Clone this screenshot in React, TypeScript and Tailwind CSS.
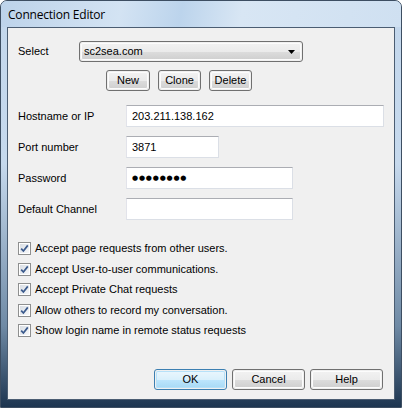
import React from 'react';

const font = "font-['Tahoma','Liberation_Sans',sans-serif]";

const CheckMark = () => (
  <svg width="13" height="13" viewBox="0 0 13 13" className="shrink-0">
    <defs>
      <linearGradient id="cbg" x1="0" y1="0" x2="1" y2="1">
        <stop offset="0" stopColor="#d9dee4" />
        <stop offset="1" stopColor="#f6f7f9" />
      </linearGradient>
    </defs>
    <rect x="0.5" y="0.5" width="12" height="12" fill="#fff" stroke="#8e8f8f" />
    <rect x="2" y="2" width="9" height="9" fill="url(#cbg)" />
    <path d="M3.2 6.6 L5.4 9 L9.8 3.4" fill="none" stroke="#3b5a8c" strokeWidth="1.7" />
  </svg>
);

const VButton = ({ label, w, def }: { label: string; w: string; def?: boolean }) => (
  <div
    className={`${w} h-[21px] rounded-[3px] border ${
      def ? 'border-[#3c7fb1]' : 'border-[#707070]'
    } p-px`}
  >
    <div
      className={`h-full rounded-[2px] flex items-center justify-center text-[11px] text-black ${
        def
          ? 'bg-[linear-gradient(to_bottom,#eaf6fd_0%,#d9f0fc_50%,#bee6fd_50%,#a7d9f5_100%)] shadow-[inset_0_0_0_1px_#b6e1f9]'
          : 'bg-[linear-gradient(to_bottom,#f2f2f2_0%,#ebebeb_50%,#dddddd_50%,#cfcfcf_100%)] shadow-[inset_0_0_0_1px_#fcfcfc]'
      }`}
    >
      {label}
    </div>
  </div>
);

const TextBox = ({ w, children }: { w: string; children?: React.ReactNode }) => (
  <div
    className={`${w} h-[22px] bg-white border border-[#dbdfe6] border-t-[#abadb3] border-l-[#e2e3ea] flex items-center px-[5px] text-[11px] text-black`}
  >
    {children}
  </div>
);

const Row = ({ label, children }: { label: string; children: React.ReactNode }) => (
  <div className="flex items-center">
    <div className="w-[108px] text-[11px] text-black">{label}</div>
    {children}
  </div>
);

const checks = [
  'Accept page requests from other users.',
  'Accept User-to-user communications.',
  'Accept Private Chat requests',
  'Allow others to record my conversation.',
  'Show login name in remote status requests',
];

export default function App() {
  return (
    <div
      className={`${font} w-[402px] h-[408px] rounded-t-[7px] border border-[#3d4e62] bg-[linear-gradient(to_bottom,#c3d7ec_0%,#c6d9ed_40%,#6f8aa5_80%,#1d3550_100%)] flex flex-col overflow-hidden`}
    >
      {/* Title bar */}
      <div className="h-[26px] shrink-0 bg-[linear-gradient(100deg,#bdd3ea_0%,#d3e3f3_30%,#bcd4ec_45%,#d8e6f4_60%,#cfe0f1_100%)] flex items-center pl-[7px]">
        <span className="font-['Open_Sans','Noto_Sans',sans-serif] text-[12px] text-black tracking-[-0.2px] pt-[1px]">
          Connection Editor
        </span>
      </div>

      {/* Client area */}
      <div className="flex-1 mx-[6px] mb-[7px] border border-[#4b5d72] bg-[#f0f0f0] flex flex-col pl-[10px] pr-[10px]">
        <div className="flex items-center mt-[13px]">
          <div className="w-[61px] text-[11px] text-black">Select</div>
          <div className="w-[224px] h-[21px] rounded-[3px] border border-[#707070] p-px">
            <div className="h-full rounded-[2px] bg-[linear-gradient(to_bottom,#f2f2f2_0%,#ebebeb_50%,#dddddd_50%,#cfcfcf_100%)] shadow-[inset_0_0_0_1px_#fcfcfc] flex items-center pl-[3px] pr-[6px] text-[11px] text-black">
              <span className="flex-1">sc2sea.com</span>
              <svg width="7" height="4" viewBox="0 0 7 4">
                <path d="M0 0 H7 L3.5 4 Z" fill="#000" />
              </svg>
            </div>
          </div>
        </div>

        <div className="flex gap-[8px] mt-[8px] ml-[88px]">
          <VButton label="New" w="w-[44px]" />
          <VButton label="Clone" w="w-[43px]" />
          <VButton label="Delete" w="w-[43px]" />
        </div>

        <div className="flex flex-col gap-[9px] mt-[14px]">
          <Row label="Hostname or IP">
            <TextBox w="w-[258px]">203.211.138.162</TextBox>
          </Row>
          <Row label="Port number">
            <TextBox w="w-[93px]">3871</TextBox>
          </Row>
          <Row label="Password">
            <TextBox w="w-[167px]">
              <span className="font-['DejaVu_Sans',sans-serif] text-[7px] tracking-[0.8px] font-bold">●●●●●●●●</span>
            </TextBox>
          </Row>
          <Row label="Default Channel">
            <TextBox w="w-[167px]" />
          </Row>
        </div>

        <div className="flex flex-col gap-[7.5px] mt-[22px]">
          {checks.map((c) => (
            <div key={c} className="flex items-center gap-[4px] h-[13px] text-[11px] text-black">
              <CheckMark />
              <span>{c}</span>
            </div>
          ))}
        </div>

        <div className="flex-1" />
        <div className="flex justify-end gap-[5px] mb-[9px] mr-[1px]">
          <VButton label="OK" w="w-[73px]" def />
          <VButton label="Cancel" w="w-[73px]" />
          <VButton label="Help" w="w-[73px]" />
        </div>
      </div>
    </div>
  );
}
